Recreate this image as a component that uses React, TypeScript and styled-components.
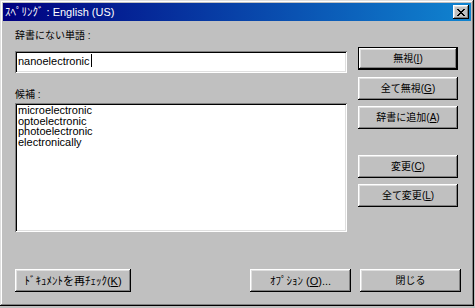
import React from "react";
import styled, { createGlobalStyle } from "styled-components";

const GlobalStyle = createGlobalStyle`
    html, body {
        margin: 0;
        padding: 0;
        background: #c0c0c0;
    }
    body {
        font-family: "Liberation Sans", "Noto Sans CJK JP", sans-serif;
        font-size: 11px;
        color: #000;
    }
`;

const Window = styled.div`
    width: 474px;
    height: 306px;
    box-sizing: border-box;
    padding: 3px;
    background: #c0c0c0;
    box-shadow: inset -1px -1px #000, inset 1px 1px #dfdfdf,
        inset -2px -2px #808080, inset 2px 2px #fff;
    display: flex;
    flex-direction: column;
`;

const TitleBar = styled.div`
    height: 18px;
    display: flex;
    align-items: center;
    justify-content: space-between;
    padding: 0 2px 0 2px;
    background: linear-gradient(to right, #000080, #1084d0);
`;

const TitleText = styled.span`
    color: #fff;
    font-size: 11px;
    line-height: 18px;
    white-space: nowrap;
`;

const CloseButton = styled.div`
    width: 16px;
    height: 14px;
    background: #c0c0c0;
    box-shadow: inset -1px -1px #000, inset 1px 1px #fff,
        inset -2px -2px #808080, inset 2px 2px #dfdfdf;
    display: flex;
    align-items: center;
    justify-content: center;
`;

const Body = styled.div`
    flex: 1;
    display: flex;
    flex-direction: column;
    padding: 9px 10px 0 12px;
`;

const Main = styled.div`
    display: flex;
    gap: 11px;
`;

const LeftColumn = styled.div`
    width: 332px;
    display: flex;
    flex-direction: column;
`;

const Label = styled.div<{ $top?: number }>`
    font-size: 10px;
    line-height: 12px;
    margin-top: ${(p) => p.$top ?? 0}px;
    white-space: nowrap;
`;

const sunken = `
    background: #fff;
    box-shadow: inset 1px 1px #808080, inset -1px -1px #fff,
        inset 2px 2px #000, inset -2px -2px #dfdfdf;
`;

const TextField = styled.div`
    ${sunken}
    height: 22px;
    margin-top: 9px;
    box-sizing: border-box;
    padding: 4px 3px 0 3px;
    line-height: 12px;
    display: flex;
    align-items: flex-start;
`;

const Caret = styled.span`
    display: inline-block;
    width: 1px;
    height: 13px;
    background: #000;
    margin-left: 1px;
    margin-top: -1px;
`;

const ListBox = styled.div`
    ${sunken}
    height: 129px;
    margin-top: 2px;
    box-sizing: border-box;
    padding: 2px 3px;
`;

const ListItem = styled.div`
    line-height: 10.7px;
    height: 10.7px;
    white-space: nowrap;
`;

const ButtonColumn = styled.div`
    display: flex;
    flex-direction: column;
    padding-top: 17px;
`;

const Button = styled.div<{
    $width?: number;
    $top?: number;
    $size?: number;
    $default?: boolean;
}>`
    width: ${(p) => p.$width ?? 100}px;
    height: 23px;
    flex-shrink: 0;
    margin-top: ${(p) => p.$top ?? 0}px;
    box-sizing: border-box;
    background: #c0c0c0;
    display: flex;
    align-items: center;
    justify-content: center;
    white-space: nowrap;
    font-size: ${(p) => p.$size ?? 10}px;
    line-height: 12px;
    box-shadow: ${(p) =>
        p.$default
            ? "inset -1px -1px #000, inset 1px 1px #000, inset -2px -2px #000, inset 2px 2px #fff, inset -3px -3px #808080, inset 3px 3px #dfdfdf"
            : "inset -1px -1px #000, inset 1px 1px #fff, inset -2px -2px #808080, inset 2px 2px #dfdfdf"};
`;

const Footer = styled.div`
    display: flex;
    margin-top: 37px;
`;

const FooterRight = styled.div`
    margin-left: auto;
    display: flex;
    gap: 9px;
`;

const Key = ({ k }: { k: string }) => (
    <>
        (<u>{k}</u>)
    </>
);

export default function App() {
    return (
        <>
            <GlobalStyle />
            <Window>
                <TitleBar>
                    <TitleText>ｽﾍﾟﾘﾝｸﾞ : English (US)</TitleText>
                    <CloseButton>
                        <svg width="8" height="7" viewBox="0 0 8 7">
                            <path d="M0 0h2v1h1v1h2v-1h1v-1h2v1h-1v1h-1v1h-1v1h1v1h1v1h1v1h-2v-1h-1v-1h-2v1h-1v1h-2v-1h1v-1h1v-1h1v-1h-1v-1h-1v-1h-1z" fill="#000" />
                        </svg>
                    </CloseButton>
                </TitleBar>
                <Body>
                    <Main>
                        <LeftColumn>
                            <Label>辞書にない単語 :</Label>
                            <TextField>
                                nanoelectronic
                                <Caret />
                            </TextField>
                            <Label $top={16}>候補 :</Label>
                            <ListBox>
                                <ListItem>microelectronic</ListItem>
                                <ListItem>optoelectronic</ListItem>
                                <ListItem>photoelectronic</ListItem>
                                <ListItem>electronically</ListItem>
                            </ListBox>
                        </LeftColumn>
                        <ButtonColumn>
                            <Button $default>
                                無視<Key k="I" />
                            </Button>
                            <Button $top={7}>
                                全て無視<Key k="G" />
                            </Button>
                            <Button $top={6}>
                                辞書に追加<Key k="A" />
                            </Button>
                            <Button $top={26}>
                                変更<Key k="C" />
                            </Button>
                            <Button $top={6}>
                                全て変更<Key k="L" />
                            </Button>
                        </ButtonColumn>
                    </Main>
                    <Footer>
                        <Button $width={116} $size={11}>
                            ﾄﾞｷｭﾒﾝﾄを再ﾁｪｯｸ<Key k="K" />
                        </Button>
                        <FooterRight>
                            <Button $width={101} $size={11}>
                                ｵﾌﾟｼｮﾝ <Key k="O" />...
                            </Button>
                            <Button $width={101}>閉じる</Button>
                        </FooterRight>
                    </Footer>
                </Body>
            </Window>
        </>
    );
}
